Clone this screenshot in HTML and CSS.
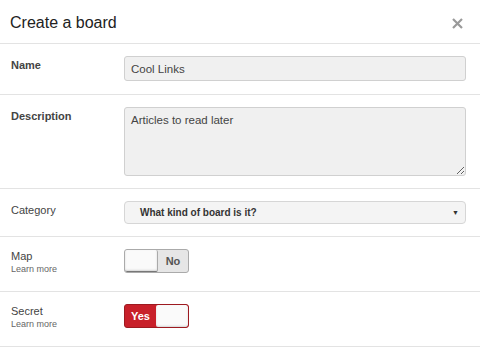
FILE: index.html
```html
<!DOCTYPE html>
<html lang="en">
<head>
    <meta charset="UTF-8">
    <title>Create a board</title>
    <link rel="stylesheet" href="styles.css">
</head>
<body>

<div class="modal">
    <div class="modalHeader">
        <h1>Create a board</h1>
        <span class="closeBtn">
            <svg width="11" height="11" viewBox="0 0 11 11">
                <path d="M1 1 L10 10 M10 1 L1 10" stroke="#9a9a9a" stroke-width="2.2" fill="none"/>
            </svg>
        </span>
    </div>

    <div class="formRow">
        <label class="fieldLabel bold">Name</label>
        <input type="text" class="textInput" value="Cool Links">
    </div>

    <div class="formRow">
        <label class="fieldLabel bold">Description</label>
        <textarea class="textInput descInput">Articles to read later</textarea>
    </div>

    <div class="formRow">
        <label class="fieldLabel">Category</label>
        <div class="selectBox">
            <span>What kind of board is it?</span>
            <span class="arrow">&#9660;</span>
        </div>
    </div>

    <div class="formRow toggleRow">
        <div class="fieldLabel">
            Map
            <div class="learnMore">Learn more</div>
        </div>
        <div class="toggle off">
            <div class="knob"></div>
            <div class="toggleText">No</div>
        </div>
    </div>

    <div class="formRow toggleRow">
        <div class="fieldLabel">
            Secret
            <div class="learnMore">Learn more</div>
        </div>
        <div class="toggle on">
            <div class="toggleText">Yes</div>
            <div class="knob"></div>
        </div>
    </div>
</div>

</body>
</html>
```

FILE: styles.css
```css
body {
    font-family: 'Liberation Sans', Arial, sans-serif;
    background-color: #fff;
    margin: 0;
    padding: 0;
    color: #333;
}

.modal {
    width: 480px;
}

.modalHeader {
    display: flex;
    justify-content: space-between;
    align-items: center;
    height: 44px;
    padding: 2px 17px 0 10px;
    border-bottom: 1px solid #e3e3e3;
    box-sizing: border-box;
}

.modalHeader h1 {
    margin: 0;
    font-size: 16px;
    font-weight: normal;
    color: #222;
}

.closeBtn {
    display: flex;
    margin-top: 2px;
}

.formRow {
    display: flex;
    align-items: flex-start;
    padding: 12px 14px 12px 11px;
    border-bottom: 1px solid #e3e3e3;
}

.fieldLabel {
    width: 113px;
    flex-shrink: 0;
    font-size: 11px;
    line-height: 13px;
    color: #444;
    padding-top: 3px;
}

.fieldLabel.bold {
    font-weight: bold;
}

.textInput {
    flex: 1;
    height: 25px;
    margin-bottom: 1px;
    box-sizing: border-box;
    background-color: #f0f0f0;
    border: 1px solid #d0d0d0;
    border-radius: 3px;
    padding: 0 6px;
    font-family: 'Liberation Sans', Arial, sans-serif;
    font-size: 11.5px;
    color: #444;
    outline: none;
}

.descInput {
    height: 69px;
    margin-bottom: 0;
    padding: 6px;
    resize: vertical;
}

.selectBox {
    flex: 1;
    display: flex;
    justify-content: space-between;
    align-items: center;
    height: 23px;
    box-sizing: border-box;
    padding: 0 6px 0 15px;
    background-color: #f4f4f4;
    border: 1px solid #d6d6d6;
    border-radius: 4px;
    font-size: 10px;
    font-weight: bold;
    color: #333;
}

.selectBox .arrow {
    font-size: 7px;
}

.toggle {
    display: flex;
    width: 65px;
    height: 24px;
    box-sizing: border-box;
    border-radius: 3px;
    overflow: hidden;
}

.toggle.off {
    border: 1px solid #aaa;
    background-color: #e6e6e6;
}

.toggle.on {
    border: 1px solid #9d1a20;
    background-color: #c8202a;
}

.knob {
    width: 32px;
    background-color: #fafafa;
    border-radius: 2px;
    box-shadow: inset 0 -1px 2px rgba(0, 0, 0, 0.15);
}

.toggle.off .knob {
    border-right: 1px solid #aaa;
    border-bottom: 1px solid #777;
}

.toggleText {
    flex: 1;
    display: flex;
    align-items: center;
    justify-content: center;
    font-size: 11px;
    font-weight: bold;
}

.toggle.off .toggleText {
    color: #555;
}

.toggle.on .toggleText {
    color: #fff;
}

.toggleRow {
    box-sizing: border-box;
    height: 55px;
    padding-bottom: 0;
}

.toggleRow .fieldLabel {
    padding-top: 1px;
}

.learnMore {
    font-size: 9px;
    line-height: 11px;
    color: #666;
    margin-top: 1px;
}
```
